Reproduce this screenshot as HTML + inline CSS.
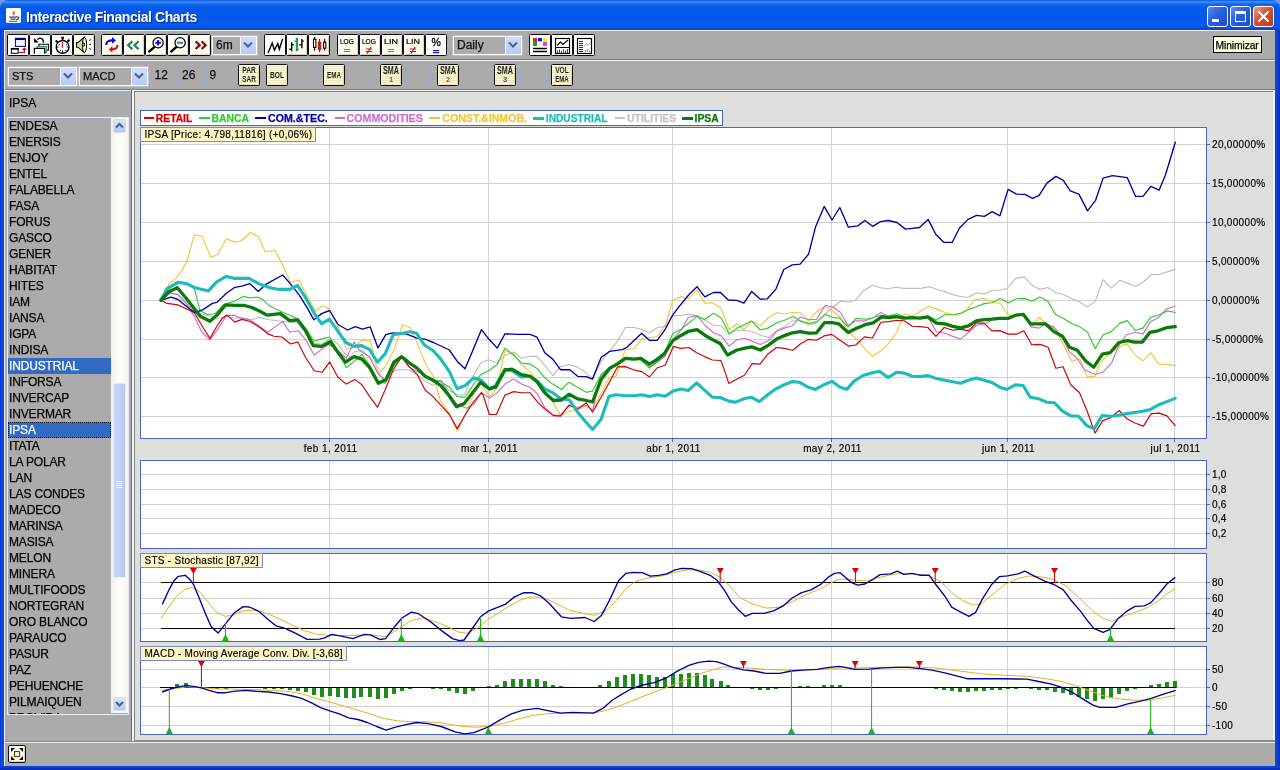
<!DOCTYPE html><html><head><meta charset="utf-8"><title>Interactive Financial Charts</title><style>
*{box-sizing:border-box}
html,body{margin:0;padding:0}
body{width:1280px;height:770px;position:relative;overflow:hidden;background:#7d97e6;
 font-family:"Liberation Sans",sans-serif;font-size:12px;color:#000;will-change:transform;-webkit-font-smoothing:antialiased}
.abs{position:absolute}
#title{left:0;top:0;width:1280px;height:30px;
 background:linear-gradient(to bottom,#0a55dc 0%,#3a90fa 6%,#1266ee 14%,#0459ea 28%,#0458ee 60%,#055af0 84%,#0550dc 94%,#0440b8 100%);
 border-radius:8px 8px 0 0}
#title .t{left:26px;top:9px;color:#fff;font-weight:bold;font-size:14px;letter-spacing:-0.43px;white-space:nowrap;
 text-shadow:1px 1px 1px #0a2a80}
#bl{left:0;top:30px;width:4px;height:740px;background:linear-gradient(to right,#0831d9,#0a4fe6 50%,#0843dc)}
#br{left:1275px;top:30px;width:5px;height:740px;background:linear-gradient(to right,#0a46dc,#0a3fd0 60%,#062da8)}
#bb{left:0;top:766px;width:1280px;height:4px;background:linear-gradient(to bottom,#0a46dc,#0836c8 60%,#062da8)}
.wb{top:6px;width:21px;height:21px;border:1px solid #fff;border-radius:3px;
 background:linear-gradient(135deg,#5b8bf0 0%,#2a5fe0 45%,#1a4bd0 100%)}
#wclose{background:linear-gradient(135deg,#f0a080 0%,#d8502a 45%,#c03a18 100%)}
#content{left:4px;top:30px;width:1271px;height:736px;background:#ababab}
.tb{left:4px;width:1271px;background:#ababab}
.btn{position:absolute;width:22px;height:22px;border:1px solid #101010;border-radius:1.5px;background:#fffdf2;
 box-shadow:inset 1px 1px 0 #fff, inset -1px -1px 0 #d8d4c0}
.btn svg{position:absolute;left:0;top:0}
.combo{position:absolute;height:19px;background:#ababab;border:1px solid #fbfcff;font-size:12px;line-height:17px;padding-left:3px;color:#111;
 box-shadow:0 0 0 0.5px rgba(255,255,255,0.5)}
.combo .ar{position:absolute;right:0;top:0;width:16px;height:17px;border-left:1px solid #f4f7ff;border-radius:0;
 background:linear-gradient(to bottom,#d0dcfc,#c2d2fa 60%,#b8caf6)}
.fld{position:absolute;height:21px;border:1px solid #9fabbf;font-size:12px;line-height:18px;padding-left:2.5px;color:#111;background:#ababab}
#left{left:4px;top:90px;width:127px;height:652px;background:#ababab;border-top:1px solid #f0f0f0}
#list{left:7px;top:117px;width:122px;height:598px;border:1px solid #e4ecf8;background:#ababab;overflow:hidden;
 box-shadow:inset 0 0 0 1px #a0acc0}
#list .it{position:absolute;left:0px;width:103px;height:16px;line-height:16px;font-size:12px;padding-left:1px;white-space:nowrap;letter-spacing:-0.15px}
#list .sel{background:#316ac5;color:#fff}
#sb{left:103px;top:0px;width:17px;height:595px;background:linear-gradient(to right,#f0f0ea,#fdfdfa 50%,#f4f4f0)}
.sbb{position:absolute;left:2px;width:13px;height:14px;border:1px solid #d4defa;border-radius:2px;
 background:linear-gradient(to bottom,#dce6fd,#c2d2f8 60%,#b4c6f4)}
#thumb{position:absolute;left:2px;top:265px;width:13px;height:195px;border:1px solid #e8eefc;border-radius:2px;
 background:linear-gradient(to right,#cad8fa,#c0d0f8 60%,#b4c6f2)}
#divider{left:131px;top:90px;width:4px;height:652px;background:linear-gradient(to right,#6e6e6e 0,#6e6e6e 1px,#f6f6f6 1px,#f6f6f6 3px,#808080 3px)}
#charts{left:135px;top:92px;width:1138px;height:648px;background:#dddfdc}
#status{left:4px;top:742px;width:1271px;height:24px;background:#ababab;border-top:1px solid #f0f0f0}
#tip{left:1213px;top:36px;width:49px;height:17px;background:#ffffe1;border:1px solid #000;font-size:10.3px;line-height:17px;text-align:left;padding-left:1.5px;letter-spacing:-0.1px}
svg text{font-family:"Liberation Sans",sans-serif}
#list .it,#tip,.combo,.fld,#left{-webkit-text-stroke:0.25px}
svg.ch text{stroke:#000;stroke-width:0.16px}
svg.ch text.lg{stroke-width:0.25px}
</style></head><body>
<div id="title" class="abs"><svg class="abs" style="left:6px;top:8px" width="15" height="15" viewBox="0 0 15 15"><rect x="0" y="0" width="15" height="15" rx="1.2" fill="#fbfbf9"/><path d="M9.4 1.6 C7.4 3.8 9.9 5.2 7.6 7.9 C7.2 6.2 5.6 5.6 6.7 3.9 C7.3 2.9 8.8 2.6 9.4 1.6z" fill="#ee8a1c"/><path d="M8.8 4 C8.2 5.2 8.9 5.8 8 7.2" stroke="#d85818" stroke-width="0.8" fill="none"/><path d="M3.3 9.1H10.4M4.5 11.1H9.6" stroke="#3c4458" stroke-width="1.1"/><path d="M10.4 8.6 C13.4 8.6 13.2 11.6 10 12" stroke="#3c4458" stroke-width="1.2" fill="none"/><path d="M2.8 13.3H11.2" stroke="#505868" stroke-width="1"/></svg><div class="t abs">Interactive Financial Charts</div>
<div class="wb abs" style="left:1207px"><svg width="19" height="19"><rect x="4" y="12" width="7" height="3" fill="#fff"/></svg></div>
<div class="wb abs" style="left:1230px"><svg width="19" height="19"><rect x="4.5" y="4.5" width="10" height="10" fill="none" stroke="#fff" stroke-width="1"/><rect x="4" y="4" width="11" height="3" fill="#fff"/></svg></div>
<div class="wb abs" id="wclose" style="left:1253px"><svg width="19" height="19"><path d="M5 5 L14 14 M14 5 L5 14" stroke="#fff" stroke-width="2.2" stroke-linecap="round"/></svg></div>
</div>
<div id="content" class="abs"></div>
<div id="bl" class="abs"></div><div id="br" class="abs"></div><div id="bb" class="abs"></div>
<div class="abs" style="left:4px;top:30px;width:1271px;height:1px;background:#f4f4f4"></div>
<div class="abs" style="left:4px;top:59px;width:1271px;height:1px;background:#7c7c7c"></div>
<div class="abs" style="left:4px;top:60px;width:1271px;height:1px;background:#f0f0f0"></div>
<div class="abs" style="left:4px;top:89px;width:1271px;height:1px;background:#7c7c7c"></div>
<div class="btn" style="left:7px;top:34px;background:#fff;box-shadow:none"><svg width="20" height="20" viewBox="0 0 20 20"><rect x="7.4" y="3.4" width="10" height="8" fill="#f2f4f0" stroke="#00008b"/><rect x="6.9" y="2.9" width="11" height="2.1" fill="#00008b"/><rect x="3.4" y="13.5" width="6.8" height="4.8" fill="#fff" stroke="#000"/><rect x="2.9" y="13" width="7.8" height="1.7" fill="#000"/><path d="M10.6 17.5H16.3V14" stroke="#c80028" stroke-width="1.2" fill="none"/><path d="M13.9 15 L16.3 12.3 L18.7 15z" fill="#c80028"/></svg></div>
<div class="btn" style="left:29px;top:34px;background:#fff;box-shadow:none"><svg width="20" height="20" viewBox="0 0 20 20"><path d="M9 11.3V9.3H18.4V15.3H16.5" fill="#fff" stroke="#000" stroke-width="1.1"/><path d="M7.2 13.4V11.5H16.5V17.4H14.7" fill="#d4f0e4" stroke="#3c8c74" stroke-width="1.1"/><path d="M4.4 18.8V13.4H14.7V18.8" fill="#fff" stroke="#000" stroke-width="1.2"/><path d="M7.4 4.6 C9 2.6 13.5 2.4 13.5 7.8" fill="none" stroke="#000" stroke-width="1.3"/><path d="M4.2 3.1 L8.7 7.6 L4.2 7.6z" fill="#000"/></svg></div>
<div class="btn" style="left:51px;top:34px;background:#fff;box-shadow:none"><svg width="20" height="20" viewBox="0 0 20 20"><circle cx="10.6" cy="11.9" r="6.4" fill="#fff" stroke="#000" stroke-width="1.4"/><path d="M10.6 5.5V2.8M9.2 2.6H12" stroke="#000" stroke-width="1.7"/><path d="M3.6 5.6L6 7.6M17.4 4.8L15.2 7" stroke="#000" stroke-width="2"/><path d="M4.9 12H6.5M14.7 12H16.3M10.6 15.5V17.6" stroke="#000" stroke-width="1.1"/><path d="M7 9.3h1v1h-1zM14.2 9.3h1v1h-1zM7.9 15h1v1h-1zM13.3 15h1v1h-1z" fill="#000"/><path d="M10.4 7V12.8" stroke="#d02828" stroke-width="1.4"/></svg></div>
<div class="btn" style="left:73px;top:34px"><svg width="20" height="20" viewBox="0 0 20 20"><path d="M2.5 7.6 L3.9 7.6 L10 2.4 L10 17.4 L3.9 12.2 L2.5 12.2z" fill="#dcdc84" stroke="#000" stroke-width="1.1"/><ellipse cx="10.5" cy="9.9" rx="2.1" ry="7.5" fill="#f6f6dc" stroke="#000" stroke-width="1"/><ellipse cx="9.8" cy="9.5" rx="0.8" ry="2" fill="none" stroke="#000" stroke-width="0.9"/><path d="M15.3 5.75L16.8 4.25M15.3 9.3H17M15.3 12.9L16.8 14.6" stroke="#000" stroke-width="1"/></svg></div>
<div class="btn" style="left:101px;top:34px"><svg width="20" height="20" viewBox="0 0 20 20"><path d="M4.3 10 C4.4 6 6.5 5.3 10.4 5.3" fill="none" stroke="#0808e0" stroke-width="2.2"/><path d="M10 2 L13.9 5.4 L10 8.7z" fill="#0808e0"/><path d="M10 14.3 C13.6 14.3 15.3 13.5 15.5 10" fill="none" stroke="#d01010" stroke-width="2.2"/><path d="M10.4 11.1 L6.9 14.4 L10.4 17.7z" fill="#d01010"/></svg></div>
<div class="btn" style="left:123px;top:34px"><svg width="20" height="20" viewBox="0 0 20 20"><path d="M8.3 6.2 L4.2 10.25 L8.3 14.3 M14.6 6.2 L10.5 10.25 L14.6 14.3" stroke="#1e8060" stroke-width="2.3" fill="none"/></svg></div>
<div class="btn" style="left:145px;top:34px"><svg width="20" height="20" viewBox="0 0 20 20"><circle cx="12.1" cy="7.75" r="5.1" fill="#fff" stroke="#000" stroke-width="1.25"/><path d="M8.3 12.2 L3.2 16.5" stroke="#000" stroke-width="2.4" stroke-linecap="round"/><path d="M9.4 7.75H14.9M12.1 5V10.5" stroke="#0808e0" stroke-width="1.9"/></svg></div>
<div class="btn" style="left:167px;top:34px"><svg width="20" height="20" viewBox="0 0 20 20"><circle cx="12.1" cy="7.75" r="5.1" fill="#fff" stroke="#000" stroke-width="1.25"/><path d="M8.3 12.2 L3.2 16.5" stroke="#000" stroke-width="2.4" stroke-linecap="round"/><path d="M9 7.75H15" stroke="#20a060" stroke-width="2.1"/></svg></div>
<div class="btn" style="left:189px;top:34px"><svg width="20" height="20" viewBox="0 0 20 20"><path d="M5.6 6.4 L9.7 10.2 L5.6 14 M11.6 6.4 L15.7 10.2 L11.6 14" stroke="#8b0a0a" stroke-width="2.3" fill="none"/></svg></div>
<div class="btn" style="left:264px;top:34px;background:#fff;box-shadow:none"><svg width="20" height="20" viewBox="0 0 20 20"><path d="M3.1 18.1 L7.2 8 L9.4 15.1 L12.7 8.6 L14.3 14.3 L17.6 3.9" fill="none" stroke="#000" stroke-width="1.4"/></svg></div>
<div class="btn" style="left:286px;top:34px"><svg width="20" height="20" viewBox="0 0 20 20"><path d="M4.7 7.2V16.2M2.3 14.3H4.7M4.7 9.7H6.7" stroke="#000" stroke-width="1.4" fill="none"/><path d="M9.9 2.8V16.2" stroke="#18a058" stroke-width="2.2"/><path d="M7.5 6.1H9.9M9.9 14.3H11.9" stroke="#18a058" stroke-width="1.3"/><path d="M14.9 3.9V13.2M12.1 9.9H14.9M14.9 6.1H16.8" stroke="#000" stroke-width="1.4" fill="none"/></svg></div>
<div class="btn" style="left:308px;top:34px"><svg width="20" height="20" viewBox="0 0 20 20"><path d="M5.6 2V15.7" stroke="#000" stroke-width="1.1"/><rect x="4.5" y="4.2" width="2.4" height="8.2" fill="#fff" stroke="#000" stroke-width="1.1"/><path d="M10.5 3.9V17.3" stroke="#d01010" stroke-width="1.2"/><rect x="9.4" y="7.2" width="2.4" height="7.4" fill="#d01010" stroke="#d01010"/><path d="M15.7 3.9V15.4" stroke="#000" stroke-width="1.1"/><rect x="14.6" y="7.2" width="2.2" height="6" fill="#fff" stroke="#000" stroke-width="1.1"/></svg></div>
<div class="btn" style="left:337px;top:34px"><svg width="20" height="20" viewBox="0 0 20 20"><text x="8.9" y="8.9" font-size="7.6" text-anchor="middle" textLength="14" lengthAdjust="spacingAndGlyphs" fill="#000" stroke="#000" stroke-width="0.2">LOG</text><path d="M5.8 14.5H12M5.8 16.5H12" stroke="#20a050" stroke-width="1.1"/></svg></div>
<div class="btn" style="left:359px;top:34px"><svg width="20" height="20" viewBox="0 0 20 20"><text x="8.9" y="8.9" font-size="7.6" text-anchor="middle" textLength="14" lengthAdjust="spacingAndGlyphs" fill="#000" stroke="#000" stroke-width="0.2">LOG</text><path d="M5.8 14H12M5.8 16.5H12M11.2 11.8L7 18.8" stroke="#c01818" stroke-width="1.1"/></svg></div>
<div class="btn" style="left:381px;top:34px"><svg width="20" height="20" viewBox="0 0 20 20"><text x="8.9" y="8.9" font-size="7.6" text-anchor="middle" textLength="14" lengthAdjust="spacingAndGlyphs" fill="#000" stroke="#000" stroke-width="0.2">LIN</text><path d="M5.8 14.5H12M5.8 16.5H12" stroke="#20a050" stroke-width="1.1"/></svg></div>
<div class="btn" style="left:403px;top:34px"><svg width="20" height="20" viewBox="0 0 20 20"><text x="8.9" y="8.9" font-size="7.6" text-anchor="middle" textLength="14" lengthAdjust="spacingAndGlyphs" fill="#000" stroke="#000" stroke-width="0.2">LIN</text><path d="M5.8 14H12M5.8 16.5H12M11.2 11.8L7 18.8" stroke="#c01818" stroke-width="1.1"/></svg></div>
<div class="btn" style="left:425px;top:34px;background:#fff;box-shadow:none"><svg width="20" height="20" viewBox="0 0 20 20"><text x="10.2" y="11" font-size="10.5" text-anchor="middle" stroke="#000" stroke-width="0.3">%</text><path d="M7 15.6H13.2M7 17.6H13.2" stroke="#2020c0" stroke-width="1.1"/></svg></div>
<div class="btn" style="left:529px;top:34px;background:#fff;box-shadow:none"><svg width="20" height="20" viewBox="0 0 20 20"><rect x="2" y="2" width="16" height="17" fill="#fff"/><rect x="3" y="3" width="4" height="4" fill="#e82020"/><rect x="3" y="7" width="4" height="4" fill="#20a020"/><rect x="8" y="3" width="4" height="3.5" fill="#1818e0"/><rect x="13" y="3" width="4" height="4" fill="#f0f020"/><rect x="13" y="7" width="4" height="4" fill="#e040e0"/><rect x="8" y="6.5" width="5" height="4.5" fill="#ffe8f0"/><path d="M3 13.5H17M3 16.5H17" stroke="#000" stroke-width="1.6"/></svg></div>
<div class="btn" style="left:551px;top:34px;background:#fff;box-shadow:none"><svg width="20" height="20" viewBox="0 0 20 20"><rect x="3.5" y="3.5" width="14" height="15" fill="#fff" stroke="#000" stroke-width="1.2"/><path d="M3.5 12.5H17.5" stroke="#000"/><path d="M5 10.5 L8.5 7 L11 9.5 L16 5" fill="none" stroke="#000" stroke-width="1.1"/><path d="M5.5 18V15.5M7.5 18V14.5M9.5 18V16M11.5 18V14.5M13.5 18V15.5M15.5 18V14" stroke="#c01818" stroke-width="1.1"/></svg></div>
<div class="btn" style="left:573px;top:34px;background:#fff;box-shadow:none"><svg width="20" height="20" viewBox="0 0 20 20"><rect x="3.5" y="3.5" width="14" height="15" fill="#fff" stroke="#000" stroke-width="1.2"/><path d="M5 6.5H9M5 8.5H9M5 10.5H9M5 12.5H9M5 14.5H9M5 16.5H9" stroke="#2020b0" stroke-width="1.1"/><path d="M10 11.5 L12.5 8.5 L14 10.5 L16.5 7.5" fill="none" stroke="#a0a0a0" stroke-width="1"/><path d="M11.5 17V15M13.5 17V14M15.5 17V15.5" stroke="#80a0a0" stroke-width="1.1"/></svg></div>
<div class="combo" style="left:212px;top:36px;width:45px">6m<div class="ar"><svg width="14" height="15"><path d="M3 5.5 L7 9.5 L11 5.5" stroke="#4d6185" stroke-width="2" fill="none"/></svg></div></div>
<div class="combo" style="left:453px;top:36px;width:69px">Daily<div class="ar"><svg width="14" height="15"><path d="M3 5.5 L7 9.5 L11 5.5" stroke="#4d6185" stroke-width="2" fill="none"/></svg></div></div>
<div class="combo" style="left:8px;top:67px;width:69px;height:19px;line-height:17px;font-size:11px;padding-left:3px">STS<div class="ar"><svg width="14" height="15"><path d="M3 5.5 L7 9.5 L11 5.5" stroke="#4d6185" stroke-width="2" fill="none"/></svg></div></div>
<div class="combo" style="left:79px;top:67px;width:69px;height:19px;line-height:17px;font-size:11px;padding-left:3px">MACD<div class="ar"><svg width="14" height="15"><path d="M3 5.5 L7 9.5 L11 5.5" stroke="#4d6185" stroke-width="2" fill="none"/></svg></div></div>
<div class="fld" style="left:151px;top:64.5px;width:26px">12</div>
<div class="fld" style="left:178.5px;top:64.5px;width:26px">26</div>
<div class="fld" style="left:206px;top:64.5px;width:26px">9</div>
<div class="btn" style="left:238px;top:64px"><svg width="20" height="20" viewBox="0 0 20 20"><path d="M0.5 1.5H19.5M0.5 3.5H19.5M0.5 5.5H19.5M0.5 7.5H19.5M0.5 9.5H19.5M0.5 11.5H19.5M0.5 13.5H19.5M0.5 15.5H19.5M0.5 17.5H19.5M0.5 19.5H19.5" stroke="#e9e5bc" stroke-width="1"/><text x="10" y="7.7" font-size="9.5" font-family="Liberation Mono,monospace" font-weight="bold" text-anchor="middle" textLength="13.6" lengthAdjust="spacingAndGlyphs" fill="#000" fill-opacity="0.88">PAR</text><text x="10" y="16.9" font-size="9.5" font-family="Liberation Mono,monospace" font-weight="bold" text-anchor="middle" textLength="13.6" lengthAdjust="spacingAndGlyphs" fill="#000" fill-opacity="0.88">SAR</text></svg></div>
<div class="btn" style="left:266px;top:64px"><svg width="20" height="20" viewBox="0 0 20 20"><path d="M0.5 1.5H19.5M0.5 3.5H19.5M0.5 5.5H19.5M0.5 7.5H19.5M0.5 9.5H19.5M0.5 11.5H19.5M0.5 13.5H19.5M0.5 15.5H19.5M0.5 17.5H19.5M0.5 19.5H19.5" stroke="#e9e5bc" stroke-width="1"/><text x="10" y="12.9" font-size="9.8" font-family="Liberation Mono,monospace" font-weight="bold" text-anchor="middle" textLength="14" lengthAdjust="spacingAndGlyphs" fill="#000" fill-opacity="0.88">BOL</text></svg></div>
<div class="btn" style="left:323px;top:64px"><svg width="20" height="20" viewBox="0 0 20 20"><path d="M0.5 1.5H19.5M0.5 3.5H19.5M0.5 5.5H19.5M0.5 7.5H19.5M0.5 9.5H19.5M0.5 11.5H19.5M0.5 13.5H19.5M0.5 15.5H19.5M0.5 17.5H19.5M0.5 19.5H19.5" stroke="#e9e5bc" stroke-width="1"/><text x="10" y="12.9" font-size="9.8" font-family="Liberation Mono,monospace" font-weight="bold" text-anchor="middle" textLength="14" lengthAdjust="spacingAndGlyphs" fill="#000" fill-opacity="0.88">EMA</text></svg></div>
<div class="btn" style="left:380px;top:64px"><svg width="20" height="20" viewBox="0 0 20 20"><path d="M0.5 1.5H19.5M0.5 3.5H19.5M0.5 5.5H19.5M0.5 7.5H19.5M0.5 9.5H19.5M0.5 11.5H19.5M0.5 13.5H19.5M0.5 15.5H19.5M0.5 17.5H19.5M0.5 19.5H19.5" stroke="#e9e5bc" stroke-width="1"/><text x="10" y="9.3" font-size="10.3" font-family="Liberation Mono,monospace" font-weight="bold" text-anchor="middle" textLength="16" lengthAdjust="spacingAndGlyphs" fill="#000" fill-opacity="0.88">SMA</text><text x="10" y="17.4" font-size="8" font-family="Liberation Mono,monospace" font-weight="bold" text-anchor="middle" textLength="4.2" lengthAdjust="spacingAndGlyphs" fill="#d02020" fill-opacity="0.88">1</text></svg></div>
<div class="btn" style="left:437px;top:64px"><svg width="20" height="20" viewBox="0 0 20 20"><path d="M0.5 1.5H19.5M0.5 3.5H19.5M0.5 5.5H19.5M0.5 7.5H19.5M0.5 9.5H19.5M0.5 11.5H19.5M0.5 13.5H19.5M0.5 15.5H19.5M0.5 17.5H19.5M0.5 19.5H19.5" stroke="#e9e5bc" stroke-width="1"/><text x="10" y="9.3" font-size="10.3" font-family="Liberation Mono,monospace" font-weight="bold" text-anchor="middle" textLength="16" lengthAdjust="spacingAndGlyphs" fill="#000" fill-opacity="0.88">SMA</text><text x="10" y="17.4" font-size="8" font-family="Liberation Mono,monospace" font-weight="bold" text-anchor="middle" textLength="4.2" lengthAdjust="spacingAndGlyphs" fill="#b02048" fill-opacity="0.88">2</text></svg></div>
<div class="btn" style="left:494px;top:64px"><svg width="20" height="20" viewBox="0 0 20 20"><path d="M0.5 1.5H19.5M0.5 3.5H19.5M0.5 5.5H19.5M0.5 7.5H19.5M0.5 9.5H19.5M0.5 11.5H19.5M0.5 13.5H19.5M0.5 15.5H19.5M0.5 17.5H19.5M0.5 19.5H19.5" stroke="#e9e5bc" stroke-width="1"/><text x="10" y="9.3" font-size="10.3" font-family="Liberation Mono,monospace" font-weight="bold" text-anchor="middle" textLength="16" lengthAdjust="spacingAndGlyphs" fill="#000" fill-opacity="0.88">SMA</text><text x="10" y="17.4" font-size="8" font-family="Liberation Mono,monospace" font-weight="bold" text-anchor="middle" textLength="4.2" lengthAdjust="spacingAndGlyphs" fill="#2020a0" fill-opacity="0.88">3</text></svg></div>
<div class="btn" style="left:551px;top:64px"><svg width="20" height="20" viewBox="0 0 20 20"><path d="M0.5 1.5H19.5M0.5 3.5H19.5M0.5 5.5H19.5M0.5 7.5H19.5M0.5 9.5H19.5M0.5 11.5H19.5M0.5 13.5H19.5M0.5 15.5H19.5M0.5 17.5H19.5M0.5 19.5H19.5" stroke="#e9e5bc" stroke-width="1"/><text x="10" y="7.7" font-size="9.5" font-family="Liberation Mono,monospace" font-weight="bold" text-anchor="middle" textLength="13.6" lengthAdjust="spacingAndGlyphs" fill="#000" fill-opacity="0.88">VOL</text><text x="10" y="16.9" font-size="9.5" font-family="Liberation Mono,monospace" font-weight="bold" text-anchor="middle" textLength="13.6" lengthAdjust="spacingAndGlyphs" fill="#000" fill-opacity="0.88">EMA</text></svg></div>
<div class="fld" style="left:290px;top:64.5px;width:27px"></div>
<div class="fld" style="left:347px;top:64.5px;width:27px"></div>
<div class="fld" style="left:404px;top:64.5px;width:27px"></div>
<div class="fld" style="left:461px;top:64.5px;width:27px"></div>
<div class="fld" style="left:518px;top:64.5px;width:27px"></div>
<div class="fld" style="left:575px;top:64.5px;width:27px"></div>
<div id="tip" class="abs">Minimizar</div>
<div class="abs" style="left:4px;top:741px;width:131px;height:1px;background:#858585;z-index:4"></div>
<div class="abs" style="left:4px;top:30px;width:1px;height:736px;background:#eef0f4;z-index:5"></div>
<div id="left" class="abs"><div class="abs" style="left:2px;top:1px;width:123px;height:24px;border:1px solid #a4adbc"></div><div class="abs" style="left:5px;top:5px;font-size:12px">IPSA</div></div>
<div id="list" class="abs">
<div class="it" style="top:0px">ENDESA</div>
<div class="it" style="top:16px">ENERSIS</div>
<div class="it" style="top:32px">ENJOY</div>
<div class="it" style="top:48px">ENTEL</div>
<div class="it" style="top:64px">FALABELLA</div>
<div class="it" style="top:80px">FASA</div>
<div class="it" style="top:96px">FORUS</div>
<div class="it" style="top:112px">GASCO</div>
<div class="it" style="top:128px">GENER</div>
<div class="it" style="top:144px">HABITAT</div>
<div class="it" style="top:160px">HITES</div>
<div class="it" style="top:176px">IAM</div>
<div class="it" style="top:192px">IANSA</div>
<div class="it" style="top:208px">IGPA</div>
<div class="it" style="top:224px">INDISA</div>
<div class="it sel" style="top:240px">INDUSTRIAL</div>
<div class="it" style="top:256px">INFORSA</div>
<div class="it" style="top:272px">INVERCAP</div>
<div class="it" style="top:288px">INVERMAR</div>
<div class="it sel" style="top:304px;outline:1px dotted #111;outline-offset:-1px">IPSA</div>
<div class="it" style="top:320px">ITATA</div>
<div class="it" style="top:336px">LA POLAR</div>
<div class="it" style="top:352px">LAN</div>
<div class="it" style="top:368px">LAS CONDES</div>
<div class="it" style="top:384px">MADECO</div>
<div class="it" style="top:400px">MARINSA</div>
<div class="it" style="top:416px">MASISA</div>
<div class="it" style="top:432px">MELON</div>
<div class="it" style="top:448px">MINERA</div>
<div class="it" style="top:464px">MULTIFOODS</div>
<div class="it" style="top:480px">NORTEGRAN</div>
<div class="it" style="top:496px">ORO BLANCO</div>
<div class="it" style="top:512px">PARAUCO</div>
<div class="it" style="top:528px">PASUR</div>
<div class="it" style="top:544px">PAZ</div>
<div class="it" style="top:560px">PEHUENCHE</div>
<div class="it" style="top:576px">PILMAIQUEN</div>
<div class="it" style="top:592px">PROVIDA</div>
<div id="sb" class="abs"><div class="sbb" style="top:1px"><svg width="11" height="12"><path d="M2 7.5 L5.5 4 L9 7.5" stroke="#4d6185" stroke-width="2" fill="none"/></svg></div><div id="thumb"><svg width="11" height="193" style="position:absolute;left:0;top:0"><path d="M2.5 97.5h6M2.5 99.5h6M2.5 101.5h6M2.5 103.5h6" stroke="#eef3fe" stroke-width="1"/></svg></div><div class="sbb" style="top:579px"><svg width="11" height="12"><path d="M2 4 L5.5 7.5 L9 4" stroke="#4d6185" stroke-width="2" fill="none"/></svg></div></div>
</div>
<div id="divider" class="abs"></div>
<div id="charts" class="abs"></div>
<div class="abs" style="left:133px;top:90px;width:1142px;height:1px;background:#f6f6f6"></div>
<div class="abs" style="left:134px;top:91px;width:1140px;height:1px;background:#808080"></div>
<div class="abs" style="left:1273px;top:91px;width:2px;height:651px;background:#f2f2f2"></div>
<div class="abs" style="left:134px;top:740px;width:1141px;height:2px;background:#8a8a8a"></div>
<div id="status" class="abs"><div class="btn" style="left:4px;top:2px;width:18px;height:18px;border-radius:2px"><svg width="16" height="16" viewBox="0 0 16 16"><path d="M2 2h4l-4 4zM14 2h-4l4 4zM2 14h4l-4 -4zM14 14h-4l4 -4z" fill="#000"/><rect x="5.5" y="5.5" width="5" height="5" fill="#fff4f0" stroke="#803000" stroke-width="1.1"/></svg></div></div>
<svg class="abs ch" style="left:0;top:0" width="1280" height="770" viewBox="0 0 1280 770"><rect x="140.5" y="110.5" width="582" height="15" fill="#fff" stroke="#4866c4" shape-rendering="crispEdges"/><path d="M143.5 118H154" stroke="#d40000" stroke-width="2" shape-rendering="crispEdges"/><text class="lg" x="155.8" y="122" font-size="11" font-weight="bold" fill="#d40000" style="stroke:#d40000" textLength="36.5" lengthAdjust="spacingAndGlyphs">RETAIL</text><path d="M199 118H209.5" stroke="#2ecc2e" stroke-width="2" shape-rendering="crispEdges"/><text class="lg" x="211.5" y="122" font-size="11" font-weight="bold" fill="#2ecc2e" style="stroke:#2ecc2e" textLength="37.6" lengthAdjust="spacingAndGlyphs">BANCA</text><path d="M255.2 118H265.7" stroke="#0000b0" stroke-width="2" shape-rendering="crispEdges"/><text class="lg" x="268" y="122" font-size="11" font-weight="bold" fill="#0000b0" style="stroke:#0000b0" textLength="59.8" lengthAdjust="spacingAndGlyphs">COM.&amp;TEC.</text><path d="M334.5 118H345" stroke="#cc6fcc" stroke-width="2" shape-rendering="crispEdges"/><text class="lg" x="346.6" y="122" font-size="11" font-weight="bold" fill="#cc6fcc" style="stroke:#cc6fcc" textLength="76.2" lengthAdjust="spacingAndGlyphs">COMMODITIES</text><path d="M429 118H439.5" stroke="#f2c63c" stroke-width="2" shape-rendering="crispEdges"/><text class="lg" x="442.3" y="122" font-size="11" font-weight="bold" fill="#f2c63c" style="stroke:#f2c63c" textLength="84.7" lengthAdjust="spacingAndGlyphs">CONST.&amp;INMOB.</text><path d="M533 118H543.5" stroke="#1cbcbc" stroke-width="3" shape-rendering="crispEdges"/><text class="lg" x="545.8" y="122" font-size="11" font-weight="bold" fill="#1cbcbc" style="stroke:#1cbcbc" textLength="61.7" lengthAdjust="spacingAndGlyphs">INDUSTRIAL</text><path d="M614.5 118H625" stroke="#c4c4c4" stroke-width="2" shape-rendering="crispEdges"/><text class="lg" x="627" y="122" font-size="11" font-weight="bold" fill="#c4c4c4" style="stroke:#c4c4c4" textLength="49.3" lengthAdjust="spacingAndGlyphs">UTILITIES</text><path d="M682 118H692.5" stroke="#0a7a0a" stroke-width="3" shape-rendering="crispEdges"/><text class="lg" x="694.5" y="122" font-size="11" font-weight="bold" fill="#0a7a0a" style="stroke:#0a7a0a" textLength="24.3" lengthAdjust="spacingAndGlyphs">IPSA</text><rect x="140.5" y="127.5" width="1066" height="311" fill="#fff" stroke="#4866c4" stroke-width="1" shape-rendering="crispEdges"/><path d="M141 144.5H1206M141 183.5H1206M141 222.5H1206M141 261.5H1206M141 300.5H1206M141 339.5H1206M141 377.5H1206M141 416.5H1206" stroke="#d2d2d6" stroke-width="1" fill="none" shape-rendering="crispEdges"/><path d="M329.5 128V438M488.5 128V438M672.5 128V438M831.5 128V438M1007.5 128V438M1174.5 128V438" stroke="#d2d2d6" stroke-width="1" fill="none" shape-rendering="crispEdges"/><polyline points="160.9,300.3 169.5,283.1 175.7,278.4 181.9,270.6 186.6,262.1 194.4,234.8 202.2,236.4 210.8,257.4 217.8,254.3 226.4,238.7 234.9,242.1 241.2,241.0 250.5,232.5 258.3,236.4 265.3,251.9 274.8,250.3 281.9,263.6 290.5,282.3 299.1,280.0 305.3,292.5 315.5,311.3 322.5,305.8 329.5,308.9 338.1,326.9 346.3,348.9 354.1,347.3 361.9,340.3 370.5,341.1 375.2,362.2 379.1,373.9 386.9,364.5 394.7,348.1 402.5,324.7 410.3,327.8 417.3,343.4 425.9,364.5 433.8,377.0 440.0,399.7 449.4,413.8 457.2,430.9 465.0,415.3 472.0,398.1 479.1,380.2 483.9,387.2 489.4,396.6 496.4,388.8 505.0,350.5 513.6,353.6 521.4,364.5 530.0,371.6 537.0,380.9 544.8,390.3 552.7,401.3 560.5,415.6 569.1,411.4 577.7,409.8 586.3,405.9 592.5,409.8 601.1,393.4 609.7,377.0 615.9,376.3 625.3,349.7 633.9,348.9 641.7,338.8 649.4,337.5 657.2,336.7 665.8,324.2 672.8,300.0 681.4,296.6 688.4,299.2 697.0,289.8 704.8,303.1 712.7,302.8 721.3,308.6 729.1,329.7 736.9,323.4 743.9,329.7 751.7,321.1 760.3,325.8 768.1,318.0 776.7,312.8 784.5,313.8 792.3,312.5 800.2,312.8 808.8,321.1 816.6,311.7 824.4,306.6 831.9,310.2 840.3,317.7 848.1,331.7 855.9,338.8 864.5,348.1 872.3,356.3 880.2,351.3 888.8,343.4 896.6,332.5 904.4,313.8 912.2,316.1 920.0,311.4 928.6,306.3 936.4,309.1 945.0,312.5 952.8,314.5 961.4,313.8 966.9,309.1 974.7,299.7 983.3,298.4 991.1,301.3 1000.5,303.6 1007.5,314.5 1015.6,316.0 1023.4,315.0 1031.3,326.9 1039.1,317.5 1046.9,323.8 1054.7,328.4 1062.5,342.5 1071.9,361.3 1079.7,358.9 1087.2,376.9 1095.0,376.1 1100.0,362.8 1110.0,353.0 1118.8,347.2 1126.6,343.3 1135.2,355.0 1143.0,360.9 1150.8,352.7 1158.6,364.1 1166.4,364.4 1175.3,365.6" fill="none" stroke="#f2c63c" stroke-width="1.15" stroke-linejoin="round" stroke-linecap="round"/><polyline points="160.9,300.3 170.3,292.9 178.0,294.0 186.6,302.6 194.4,311.9 202.0,314.0 210.0,316.0 217.0,319.0 226.4,316.3 234.9,318.2 243.5,317.9 251.3,319.7 259.1,317.4 269.4,319.8 280.0,321.0 289.7,322.0 297.5,323.0 305.3,333.0 314.2,343.4 322.0,344.2 329.8,338.8 337.7,343.4 343.9,352.8 350.0,357.0 354.1,352.0 361.9,350.0 369.7,358.0 377.5,372.0 385.3,381.5 393.9,370.8 399.4,369.7 408.8,369.7 417.3,374.7 425.9,381.7 433.0,385.6 440.8,380.2 448.6,390.3 457.2,395.0 464.2,395.0 472.8,376.3 481.4,362.2 488.6,359.8 497.2,363.0 505.0,355.2 513.6,352.0 521.4,358.3 530.0,356.3 537.0,356.3 544.8,365.3 552.7,375.5 560.5,366.6 569.1,364.5 576.9,366.9 585.5,372.3 592.5,379.1 601.1,361.4 609.7,351.3 617.5,341.1 625.3,327.5 633.9,327.5 641.7,329.4 649.4,332.8 658.0,327.3 665.0,326.6 672.8,315.6 681.4,315.3 689.2,314.1 697.0,315.9 704.8,320.0 712.7,325.0 721.3,325.8 729.1,334.4 736.9,330.0 743.9,330.5 751.7,331.3 760.3,335.2 768.9,337.5 776.7,330.5 784.5,326.6 792.3,321.1 800.2,320.3 808.8,325.0 816.6,322.7 824.4,314.8 832.2,307.8 840.6,301.3 848.4,302.2 855.5,300.2 863.3,290.8 872.7,285.3 880.5,287.7 888.3,288.8 896.1,287.2 903.9,288.4 912.5,288.4 921.1,288.4 928.9,286.6 936.7,289.2 944.5,291.6 952.3,294.4 959.4,296.3 968.0,297.5 976.6,292.8 984.4,293.9 992.2,290.5 1000.0,290.0 1007.0,288.6 1015.6,278.4 1024.2,276.9 1031.3,284.7 1039.8,289.4 1047.7,287.5 1055.5,292.5 1064.1,294.8 1071.9,298.8 1079.7,301.9 1087.5,306.9 1095.3,301.1 1103.1,279.7 1111.3,288.1 1119.5,280.3 1127.3,283.1 1135.6,286.3 1143.0,282.3 1151.6,274.5 1159.4,274.5 1167.2,271.9 1175.3,269.4" fill="none" stroke="#bdbdbd" stroke-width="1.15" stroke-linejoin="round" stroke-linecap="round"/><polyline points="160.9,300.3 170.3,293.2 178.0,294.8 186.6,304.1 194.4,316.6 201.4,331.4 210.0,340.0 217.8,329.1 226.4,315.8 234.2,315.1 241.9,318.5 249.7,319.7 257.5,324.7 265.3,330.6 267.8,332.3 282.7,321.4 289.7,332.3 298.3,330.8 305.6,339.5 314.2,355.2 322.0,348.9 329.0,344.2 337.7,350.5 346.3,358.3 354.1,341.9 359.5,350.5 369.7,356.7 377.5,373.1 385.3,381.0 393.5,366.0 401.7,357.5 408.8,366.9 417.3,371.6 425.9,376.3 433.0,380.2 440.8,380.9 448.6,393.4 457.2,404.4 466.6,408.3 473.6,404.4 481.4,392.7 489.4,398.1 497.2,392.7 505.0,384.1 513.6,379.1 521.4,384.1 530.0,387.2 537.0,393.4 544.8,407.5 553.4,415.3 560.5,415.3 569.1,405.2 577.7,407.5 586.3,405.2 592.5,410.6 601.1,374.7 609.7,366.9 617.5,363.8 625.3,358.3 633.9,359.1 640.9,358.3 649.5,366.9 657.3,362.2 665.0,356.3 672.8,339.8 681.4,329.7 688.4,317.2 697.0,315.6 704.8,325.0 713.4,332.8 721.3,335.9 729.1,346.1 736.9,339.8 744.7,338.3 752.5,341.4 760.3,344.5 768.9,340.6 776.7,331.3 784.5,328.1 792.3,325.8 800.2,317.2 808.8,319.5 816.6,319.5 825.2,305.5 833.0,307.0 840.3,312.2 848.1,325.5 855.9,320.8 865.3,320.8 873.1,317.7 880.9,312.5 887.2,316.1 896.6,316.6 904.4,318.1 912.2,317.7 920.0,318.1 927.8,316.9 936.4,331.7 945.0,333.3 952.8,336.4 960.6,339.1 968.4,332.5 976.3,325.5 984.1,323.9 991.9,320.0 999.7,318.4 1007.5,318.1 1015.6,315.2 1023.4,314.4 1031.3,326.9 1039.1,328.1 1045.3,323.8 1053.9,326.9 1061.7,336.3 1069.5,351.9 1076.6,357.8 1084.4,369.8 1095.3,374.5 1103.1,372.2 1111.7,362.8 1118.8,345.6 1126.6,334.7 1135.2,332.3 1143.0,333.9 1150.8,321.4 1158.6,317.5 1166.4,308.9 1175.3,306.3" fill="none" stroke="#cc6fcc" stroke-width="1.15" stroke-linejoin="round" stroke-linecap="round"/><polyline points="160.9,300.3 167.1,290.1 178.0,281.6 186.6,283.0 194.4,288.6 199.9,310.4 207.7,314.7 215.5,313.5 223.2,304.9 234.9,301.0 243.5,296.4 249.7,297.9 257.5,297.1 263.0,299.8 269.4,305.8 280.3,311.3 289.7,315.2 298.3,319.1 306.9,330.0 313.9,341.3 322.5,338.6 329.5,337.0 337.7,350.5 346.3,367.7 354.1,361.4 361.9,354.4 369.7,365.3 378.3,381.7 385.3,383.3 393.9,364.5 401.7,357.5 409.5,363.5 417.3,368.8 425.2,376.0 433.0,379.5 440.8,381.7 449.4,387.2 457.2,396.6 465.0,397.3 472.8,385.6 480.6,374.7 488.6,370.8 497.2,364.5 505.0,348.1 513.6,355.2 521.4,363.0 530.0,364.1 537.0,368.4 544.8,377.8 552.7,384.1 561.3,389.5 569.1,382.2 577.7,387.5 586.3,392.2 592.5,391.1 601.1,374.7 609.7,367.7 617.5,363.0 625.3,358.3 633.9,359.1 640.0,359.4 649.4,368.0 657.2,361.7 665.0,351.6 672.8,333.6 681.4,328.9 689.2,322.7 697.0,316.4 704.8,319.5 713.4,313.3 721.3,318.0 729.1,333.6 736.9,328.1 743.9,325.0 751.7,321.1 760.3,330.0 768.1,328.1 776.7,322.7 784.5,320.3 793.1,316.4 800.2,321.1 808.8,323.4 816.6,321.9 825.2,314.4 832.2,317.2 840.3,318.4 848.1,327.0 855.9,318.4 865.3,319.2 873.1,317.7 880.9,315.3 888.8,316.1 896.6,313.8 904.4,317.0 912.2,317.5 920.0,317.7 927.8,316.1 936.4,320.0 945.0,314.5 952.8,315.0 961.4,313.0 970.0,309.1 976.3,306.7 984.1,303.6 991.9,302.8 1000.5,298.4 1008.6,303.1 1016.4,298.8 1024.2,298.4 1032.0,301.1 1039.8,296.9 1047.7,301.1 1055.5,314.4 1064.1,318.8 1071.9,323.8 1079.7,326.6 1087.5,332.3 1095.3,348.8 1103.1,334.7 1110.9,331.9 1119.5,323.4 1127.3,320.6 1135.2,330.3 1143.0,328.1 1150.8,317.2 1159.4,314.7 1167.2,310.9 1175.3,312.5" fill="none" stroke="#2ecc2e" stroke-width="1.15" stroke-linejoin="round" stroke-linecap="round"/><polyline points="160.9,300.3 167.1,303.4 178.0,304.9 186.6,309.1 194.4,312.7 203.0,327.5 210.0,338.4 217.0,326.0 222.5,318.2 227.1,315.1 234.9,322.1 241.9,319.4 249.7,321.3 257.5,326.0 262.0,329.0 267.8,333.9 274.0,336.3 281.9,337.0 290.5,344.0 297.8,341.9 305.6,357.5 314.2,370.8 322.0,372.3 329.8,361.9 337.7,377.0 346.3,384.1 354.8,379.4 361.9,384.8 369.7,396.6 377.5,407.2 385.3,389.5 393.1,370.0 401.7,356.7 408.8,366.1 417.3,374.7 425.2,390.3 433.0,396.6 440.8,405.2 449.4,414.5 457.2,428.6 465.0,415.3 472.8,402.8 481.4,392.7 483.0,395.0 489.4,414.5 496.4,414.5 505.0,395.0 513.6,391.6 521.4,392.7 530.0,392.7 537.0,401.3 544.8,409.1 553.4,415.6 560.5,416.1 569.1,405.2 577.7,409.1 586.3,402.8 592.5,412.2 601.1,397.3 609.7,381.7 617.5,366.9 625.3,366.6 633.9,370.0 641.7,371.6 649.5,377.0 657.3,367.7 665.2,365.3 673.3,346.4 680.3,348.4 688.9,347.5 696.7,352.7 704.5,356.6 712.3,360.0 720.9,360.5 724.1,369.1 728.8,383.4 736.6,379.2 744.4,375.3 752.2,363.6 760.0,364.1 767.8,354.2 776.4,347.5 784.2,348.4 792.8,350.3 800.6,343.8 808.4,339.4 816.3,340.2 824.1,335.9 831.9,334.4 840.0,340.3 848.6,346.1 855.7,345.0 864.5,336.9 872.3,338.0 880.9,322.3 888.8,321.6 896.6,320.3 904.4,320.8 912.2,326.3 920.0,326.6 927.8,327.5 935.9,336.4 944.2,327.5 952.8,330.2 960.6,329.1 968.4,330.9 976.3,323.1 984.1,323.1 991.9,330.9 999.7,330.6 1008.3,334.1 1016.9,334.1 1023.9,330.8 1031.7,344.8 1040.3,344.4 1048.1,347.2 1055.9,368.3 1063.0,366.7 1070.8,384.7 1079.4,392.5 1087.2,411.3 1095.0,433.1 1102.8,420.6 1110.6,417.8 1119.2,410.5 1127.0,418.8 1134.8,423.0 1143.4,426.1 1151.3,413.6 1159.1,413.1 1166.9,415.9 1175.2,425.6" fill="none" stroke="#d00000" stroke-width="1.15" stroke-linejoin="round" stroke-linecap="round"/><polyline points="160.9,300.3 171.0,297.1 178.0,299.5 186.6,306.5 195.2,312.7 203.0,309.6 212.3,303.4 217.0,302.3 226.4,293.2 234.9,287.3 241.9,286.2 249.7,283.6 258.3,291.4 265.3,284.7 269.4,282.3 282.7,275.0 290.5,283.9 299.1,294.8 306.9,307.3 313.9,319.8 321.7,313.6 329.5,310.5 338.1,324.5 347.5,330.0 355.3,326.6 362.3,329.2 370.2,326.9 378.0,348.0 385.8,334.7 392.8,332.8 406.1,333.9 416.3,337.8 425.6,339.4 433.4,342.5 449.4,350.0 457.2,361.4 465.0,368.8 472.8,350.5 481.4,329.7 488.6,338.8 497.2,348.1 505.0,333.8 517.5,334.4 530.0,334.4 537.0,337.2 544.8,352.8 552.7,359.1 560.5,369.7 569.8,369.7 577.7,376.3 586.3,376.6 592.5,379.1 601.1,357.5 609.7,351.3 622.2,349.7 626.9,347.3 641.7,333.3 643.0,334.4 649.4,340.3 657.2,340.3 665.0,329.7 672.8,314.8 680.6,304.7 688.4,295.3 697.0,286.7 704.8,296.9 713.4,292.5 720.5,292.5 728.3,300.0 736.9,300.3 743.9,303.1 751.7,291.4 760.3,299.2 767.3,298.8 775.9,289.1 783.8,269.5 792.3,264.8 800.2,264.1 808.6,254.1 815.6,226.7 824.2,206.4 832.0,220.0 839.8,207.5 848.4,227.2 857.8,225.9 864.8,220.5 872.7,226.3 880.5,221.6 888.3,220.5 896.9,222.5 905.5,229.1 912.5,228.3 919.5,227.5 928.1,219.4 935.9,234.5 943.8,242.3 952.3,242.3 959.4,228.3 968.0,219.4 976.6,215.3 984.4,216.3 992.2,211.6 1000.0,215.8 1008.1,189.4 1016.4,194.1 1025.0,194.4 1032.5,198.3 1039.1,195.3 1046.9,183.1 1055.9,176.4 1063.3,180.3 1070.3,190.9 1078.9,194.1 1087.5,210.9 1095.6,200.3 1103.1,178.1 1112.5,175.6 1127.3,177.7 1135.6,196.4 1143.0,196.4 1150.8,186.3 1159.1,190.2 1165.6,174.5 1175.3,142.2" fill="none" stroke="#00009c" stroke-width="1.35" stroke-linejoin="round" stroke-linecap="round"/><polyline points="160.9,300.3 167.1,288.6 178.0,282.3 186.6,283.6 195.2,287.8 208.4,290.9 217.0,281.6 226.4,276.4 234.9,278.4 249.0,278.4 259.1,283.9 269.4,287.5 278.8,289.4 289.7,289.4 297.5,285.5 305.3,297.2 313.9,312.8 321.7,323.8 329.5,319.1 338.1,331.6 345.9,342.5 353.8,346.4 361.6,345.6 369.7,349.7 377.5,362.2 385.3,353.6 393.1,334.8 402.5,333.3 410.3,331.7 416.6,333.3 424.4,345.0 433.0,350.5 440.8,359.1 449.4,371.6 457.2,388.8 465.0,385.6 473.6,377.8 481.4,380.2 489.4,388.8 495.6,385.6 505.0,369.2 512.0,370.8 521.4,377.0 530.0,376.3 537.0,380.9 544.8,388.8 552.7,392.7 561.3,398.9 569.1,399.7 577.7,412.2 584.7,420.8 592.5,429.4 601.1,419.2 608.9,396.6 615.9,394.7 625.3,395.8 633.9,395.8 641.7,394.7 649.5,396.6 657.3,394.7 665.2,396.3 673.3,390.9 681.1,389.1 688.1,390.6 696.7,382.8 704.5,390.2 712.3,397.2 720.2,397.5 728.8,401.1 735.8,402.2 743.6,398.8 751.4,397.2 759.2,401.6 767.8,394.8 775.6,389.1 784.2,384.7 792.0,381.6 799.8,382.3 807.7,387.0 815.5,389.4 823.3,385.0 831.9,381.3 839.7,387.0 846.7,389.4 854.4,380.9 863.0,375.5 871.6,373.1 879.4,371.3 888.0,377.5 896.6,372.3 904.4,373.1 912.2,376.3 920.0,376.6 927.8,375.5 936.4,378.6 945.0,380.2 952.8,381.7 960.6,383.3 968.4,380.2 976.3,378.1 984.1,380.2 991.9,382.5 999.7,387.2 1006.7,389.5 1015.3,384.8 1023.1,385.5 1030.2,397.2 1038.8,398.8 1046.6,402.2 1054.4,402.7 1062.2,410.9 1070.8,415.9 1078.6,416.3 1086.4,425.3 1094.2,428.8 1102.0,415.6 1110.6,416.3 1119.2,415.2 1127.0,413.6 1134.8,412.5 1142.7,411.3 1150.5,409.4 1158.3,405.0 1166.9,401.6 1175.2,398.4" fill="none" stroke="#1cbcbc" stroke-width="3.1" stroke-linejoin="round" stroke-linecap="round"/><polyline points="160.9,300.3 168.7,291.7 177.3,287.8 186.6,298.7 194.4,308.8 200.6,316.6 210.0,321.3 217.0,315.1 225.6,304.9 234.9,305.4 243.5,305.4 250.5,307.0 258.3,310.4 265.3,314.3 267.8,315.2 280.3,313.6 289.7,320.6 297.5,319.8 305.3,330.0 313.1,345.6 321.7,346.4 330.3,341.7 337.7,352.0 345.5,362.2 354.1,356.7 361.9,359.1 369.7,367.7 378.3,383.3 386.1,379.4 393.9,362.2 401.7,356.7 409.5,363.0 417.3,368.4 425.2,376.3 433.0,380.2 440.8,385.6 448.6,395.0 456.4,406.7 464.2,403.6 472.0,393.4 480.6,382.5 489.4,388.8 495.6,387.2 505.0,370.0 512.0,369.2 521.4,374.7 530.0,376.3 537.0,381.7 544.8,392.7 553.4,400.5 561.3,400.0 569.1,394.2 577.7,398.9 586.3,400.5 592.5,402.0 601.1,379.4 609.7,368.4 617.5,363.8 625.3,358.3 633.9,359.1 640.9,358.3 649.4,364.1 657.2,359.4 664.2,353.9 672.8,340.6 681.4,335.2 688.4,331.3 697.0,329.7 704.8,335.2 712.7,339.8 720.5,343.8 727.5,355.0 736.9,350.0 743.9,348.4 751.7,346.9 760.3,350.0 768.1,345.3 776.7,339.1 784.5,335.6 792.3,332.8 800.2,331.6 808.8,333.1 816.6,332.8 824.4,322.7 832.2,322.7 838.8,323.9 848.1,332.5 855.9,328.6 865.3,324.7 873.1,322.8 881.7,316.9 888.8,317.7 896.6,316.6 904.4,318.1 912.2,317.7 920.0,318.1 927.8,316.9 936.4,323.1 945.0,323.9 952.8,326.3 960.6,327.8 968.4,325.9 976.3,320.8 984.1,319.7 991.9,319.2 999.7,318.4 1008.6,318.3 1015.6,315.2 1023.4,314.4 1030.5,323.8 1045.3,323.8 1053.9,331.6 1062.5,336.3 1069.5,347.2 1077.3,350.3 1085.9,361.3 1093.8,367.2 1102.3,354.2 1110.2,352.7 1118.8,342.5 1127.3,340.6 1134.4,342.2 1142.2,342.2 1150.0,332.3 1157.8,330.8 1166.4,327.7 1175.3,326.6" fill="none" stroke="#0a7a0a" stroke-width="3.3" stroke-linejoin="round" stroke-linecap="round"/><rect x="140.5" y="127.5" width="175" height="14" fill="#fff4c4" stroke="#7a8cc0" shape-rendering="crispEdges"/><text x="144.5" y="138" font-size="10" textLength="167.5" lengthAdjust="spacing">IPSA [Price: 4.798,11816] (+0,06%)</text><path d="M1206 144.5H1210M1206 183.5H1210M1206 222.5H1210M1206 261.5H1210M1206 300.5H1210M1206 339.5H1210M1206 377.5H1210M1206 416.5H1210" stroke="#4866c4" shape-rendering="crispEdges"/><text x="1212" y="148" font-size="10" letter-spacing="0.32">20,00000%</text><text x="1212" y="187" font-size="10" letter-spacing="0.32">15,00000%</text><text x="1212" y="226" font-size="10" letter-spacing="0.32">10,00000%</text><text x="1212" y="265" font-size="10" letter-spacing="0.32">5,00000%</text><text x="1212" y="304" font-size="10" letter-spacing="0.32">0,00000%</text><text x="1212" y="343" font-size="10" letter-spacing="0.32">-5,00000%</text><text x="1212" y="381" font-size="10" letter-spacing="0.32">-10,00000%</text><text x="1212" y="420" font-size="10" letter-spacing="0.32">-15,00000%</text><path d="M329.5 438V442M488.5 438V442M672.5 438V442M831.5 438V442M1007.5 438V442M1174.5 438V442" stroke="#4866c4" shape-rendering="crispEdges"/><text x="330.5" y="452" font-size="10" text-anchor="middle" letter-spacing="0.4">feb 1, 2011</text><text x="489.5" y="452" font-size="10" text-anchor="middle" letter-spacing="0.4">mar 1, 2011</text><text x="673.5" y="452" font-size="10" text-anchor="middle" letter-spacing="0.4">abr 1, 2011</text><text x="832.5" y="452" font-size="10" text-anchor="middle" letter-spacing="0.4">may 2, 2011</text><text x="1008.5" y="452" font-size="10" text-anchor="middle" letter-spacing="0.4">jun 1, 2011</text><text x="1175.5" y="452" font-size="10" text-anchor="middle" letter-spacing="0.4">jul 1, 2011</text><rect x="140.5" y="460.5" width="1066" height="88" fill="#fff" stroke="#4866c4" stroke-width="1" shape-rendering="crispEdges"/><path d="M141 474.5H1206M141 489.5H1206M141 504.5H1206M141 518.5H1206M141 533.5H1206" stroke="#d2d2d6" stroke-width="1" fill="none" shape-rendering="crispEdges"/><path d="M329.5 461V548M488.5 461V548M672.5 461V548M831.5 461V548M1007.5 461V548M1174.5 461V548" stroke="#d2d2d6" stroke-width="1" fill="none" shape-rendering="crispEdges"/><path d="M1206 474.5H1210M1206 489.5H1210M1206 504.5H1210M1206 518.5H1210M1206 533.5H1210" stroke="#4866c4" shape-rendering="crispEdges"/><text x="1212" y="478" font-size="10" letter-spacing="0.25">1,0</text><text x="1212" y="493" font-size="10" letter-spacing="0.25">0,8</text><text x="1212" y="508" font-size="10" letter-spacing="0.25">0,6</text><text x="1212" y="522" font-size="10" letter-spacing="0.25">0,4</text><text x="1212" y="537" font-size="10" letter-spacing="0.25">0,2</text><rect x="140" y="549" width="1067" height="4" fill="#d4dcec"/><rect x="140.5" y="553.5" width="1066" height="88" fill="#fff" stroke="#4866c4" stroke-width="1" shape-rendering="crispEdges"/><path d="M141 582.5H1206M141 598.5H1206M141 613.5H1206M141 628.5H1206" stroke="#d2d2d6" stroke-width="1" fill="none" shape-rendering="crispEdges"/><path d="M329.5 554V641M488.5 554V641M672.5 554V641M831.5 554V641M1007.5 554V641M1174.5 554V641" stroke="#d2d2d6" stroke-width="1" fill="none" shape-rendering="crispEdges"/><path d="M161 582.5H1175M161 628.5H1175" stroke="#000" stroke-width="1.3" shape-rendering="crispEdges"/><polyline points="161.1,618.8 168.1,607.8 176.7,596.1 185.3,589.1 191.6,587.5 199.4,591.4 208.8,603.1 216.6,612.2 225.2,616.4 233.8,614.8 243.1,610.9 252.5,610.2 261.9,611.7 275.9,617.2 288.4,623.4 304.1,630.5 316.6,634.4 327.5,635.2 340.0,635.6 352.8,635.5 370.4,634.8 385.6,636.7 397.3,629.7 411.4,620.3 423.1,618.0 434.8,621.5 446.6,626.2 458.3,632.0 466.5,633.2 477.0,628.5 488.7,619.1 505.2,608.6 519.2,600.4 530.9,596.9 542.6,597.3 554.4,602.7 568.4,609.8 582.5,613.3 594.2,615.2 603.6,612.1 610.0,607.0 616.4,600.4 625.8,588.7 635.2,581.6 646.9,578.1 660.9,576.2 675.0,572.3 686.7,569.9 698.4,569.9 710.2,572.3 719.5,577.0 728.9,585.2 740.6,598.0 752.3,603.9 766.4,608.1 778.1,607.4 792.2,601.6 806.3,594.5 820.3,588.7 832.0,582.3 839.1,579.3 848.4,579.3 857.8,580.5 867.2,580.9 876.6,578.1 888.3,575.3 900.0,573.6 911.9,573.9 929.1,575.8 941.1,581.9 951.7,592.5 962.3,600.5 973.0,605.0 980.9,604.4 991.6,595.2 1004.8,584.5 1018.1,578.4 1028.7,576.0 1039.4,576.6 1052.6,579.2 1065.9,585.9 1079.2,597.8 1092.5,611.1 1103.1,618.5 1112.4,621.7 1121.7,616.9 1135.0,612.4 1148.3,607.1 1158.9,600.5 1166.9,593.8 1175.3,588.5" fill="none" stroke="#e8b020" stroke-width="1"/><polyline points="162.3,604.4 169.7,588.3 173.6,581.3 178.3,576.3 185.3,575.3 190.0,579.7 193.9,585.2 199.4,598.4 205.6,614.1 211.1,626.6 218.1,633.1 225.2,624.2 233.8,613.3 243.1,606.6 249.4,607.0 258.8,611.3 268.1,619.5 275.9,625.8 283.8,627.8 296.3,633.6 307.2,639.4 319.7,639.1 324.7,637.9 331.7,634.4 341.1,636.2 352.8,638.6 364.5,634.4 370.4,634.8 379.8,639.5 385.6,638.6 395.0,626.2 402.0,618.0 411.4,612.1 418.4,613.7 430.2,621.5 441.9,630.9 452.4,638.6 459.4,640.6 464.1,640.0 472.3,628.5 480.5,616.8 488.7,610.9 505.2,604.4 514.5,596.9 523.9,592.7 532.1,592.7 540.3,595.7 548.5,602.7 561.4,616.8 570.8,618.4 584.8,617.5 594.2,621.5 601.3,615.6 609.4,600.4 618.7,580.5 625.8,573.4 632.8,572.3 642.2,572.7 650.4,576.2 658.6,575.3 666.8,573.9 675.0,569.9 682.0,568.3 691.4,568.7 700.8,571.6 710.2,575.3 717.2,580.5 724.2,589.8 731.2,601.6 738.3,609.8 745.3,616.3 752.3,613.3 764.0,613.3 773.4,610.9 782.8,606.2 792.2,598.0 801.6,592.7 810.9,589.8 820.3,584.7 828.5,577.0 834.4,573.4 840.2,572.7 846.1,578.1 852.0,582.8 857.8,585.2 864.8,584.0 873.0,579.3 880.1,574.6 890.6,573.9 897.3,571.2 903.9,574.4 911.9,573.4 919.8,575.2 929.1,575.2 935.8,584.5 945.1,596.5 951.7,607.1 959.7,611.6 969.0,616.4 975.6,612.4 982.3,599.1 991.6,584.5 999.5,576.6 1007.5,575.8 1018.1,573.9 1024.8,571.2 1034.0,575.8 1044.7,581.1 1054.0,584.5 1063.3,589.8 1071.2,600.5 1080.5,611.1 1087.2,620.4 1093.8,628.4 1103.1,632.3 1109.7,629.7 1117.7,619.1 1127.0,611.1 1135.0,606.3 1144.3,605.8 1150.9,602.6 1158.9,593.8 1166.9,584.0 1175.3,577.4" fill="none" stroke="#00009c" stroke-width="1.35" stroke-linejoin="round"/><path d="M189.9 568h7l-3.5 6z" fill="#e00000"/><path d="M193.4 573V583" stroke="#c00000" stroke-width="1"/><path d="M716.7 568h7l-3.5 6z" fill="#e00000"/><path d="M720.2 573V583" stroke="#c00000" stroke-width="1"/><path d="M851.9 568h7l-3.5 6z" fill="#e00000"/><path d="M855.4 573V583" stroke="#c00000" stroke-width="1"/><path d="M931.7 568h7l-3.5 6z" fill="#e00000"/><path d="M935.2 573V583" stroke="#c00000" stroke-width="1"/><path d="M1051 568h7l-3.5 6z" fill="#e00000"/><path d="M1054.5 573V583" stroke="#c00000" stroke-width="1"/><path d="M222 641h7l-3.5 -7z" fill="#18b818"/><path d="M225.5 623.4V640" stroke="#18b818" stroke-width="1"/><path d="M397.8 641h7l-3.5 -7z" fill="#18b818"/><path d="M401.3 618V640" stroke="#18b818" stroke-width="1"/><path d="M477 641h7l-3.5 -7z" fill="#18b818"/><path d="M480.5 616.8V640" stroke="#18b818" stroke-width="1"/><path d="M1107 641h7l-3.5 -7z" fill="#18b818"/><path d="M1110.5 627V640" stroke="#18b818" stroke-width="1"/><rect x="140.5" y="553.5" width="122" height="14" fill="#fff4c4" stroke="#7a8cc0" shape-rendering="crispEdges"/><text x="144.5" y="564" font-size="10" textLength="114" lengthAdjust="spacing">STS - Stochastic [87,92]</text><path d="M1206 582.5H1210M1206 598.5H1210M1206 613.5H1210M1206 628.5H1210" stroke="#4866c4" shape-rendering="crispEdges"/><text x="1212" y="586" font-size="10" letter-spacing="0.25">80</text><text x="1212" y="602" font-size="10" letter-spacing="0.25">60</text><text x="1212" y="617" font-size="10" letter-spacing="0.25">40</text><text x="1212" y="632" font-size="10" letter-spacing="0.25">20</text><rect x="140.5" y="646.5" width="1066" height="88" fill="#fff" stroke="#4866c4" stroke-width="1" shape-rendering="crispEdges"/><path d="M141 669.5H1206M141 687.5H1206M141 706.5H1206M141 725.5H1206" stroke="#d2d2d6" stroke-width="1" fill="none" shape-rendering="crispEdges"/><path d="M329.5 647V734M488.5 647V734M672.5 647V734M831.5 647V734M1007.5 647V734M1174.5 647V734" stroke="#d2d2d6" stroke-width="1" fill="none" shape-rendering="crispEdges"/><rect x="167" y="686.8" width="4" height="0.8" fill="#1e8c1e" shape-rendering="crispEdges"/><rect x="175" y="684.0" width="4" height="3.5" fill="#1e8c1e" shape-rendering="crispEdges"/><rect x="184" y="683.3" width="4" height="4.2" fill="#1e8c1e" shape-rendering="crispEdges"/><rect x="192" y="685.6" width="4" height="1.9" fill="#1e8c1e" shape-rendering="crispEdges"/><rect x="215" y="687.5" width="4" height="1.9" fill="#1e8c1e" shape-rendering="crispEdges"/><rect x="224" y="687.5" width="4" height="1.2" fill="#1e8c1e" shape-rendering="crispEdges"/><rect x="263" y="687.5" width="4" height="1.2" fill="#1e8c1e" shape-rendering="crispEdges"/><rect x="272" y="687.5" width="4" height="1.2" fill="#1e8c1e" shape-rendering="crispEdges"/><rect x="280" y="687.5" width="4" height="1.6" fill="#1e8c1e" shape-rendering="crispEdges"/><rect x="288" y="687.5" width="4" height="2.3" fill="#1e8c1e" shape-rendering="crispEdges"/><rect x="296" y="687.5" width="4" height="3.0" fill="#1e8c1e" shape-rendering="crispEdges"/><rect x="304" y="687.5" width="4" height="4.7" fill="#1e8c1e" shape-rendering="crispEdges"/><rect x="312" y="687.5" width="4" height="7.7" fill="#1e8c1e" shape-rendering="crispEdges"/><rect x="320" y="687.5" width="4" height="9.4" fill="#1e8c1e" shape-rendering="crispEdges"/><rect x="328" y="687.5" width="4" height="8.7" fill="#1e8c1e" shape-rendering="crispEdges"/><rect x="336" y="687.5" width="4" height="9.4" fill="#1e8c1e" shape-rendering="crispEdges"/><rect x="344" y="687.5" width="4" height="10.5" fill="#1e8c1e" shape-rendering="crispEdges"/><rect x="352" y="687.5" width="4" height="10.1" fill="#1e8c1e" shape-rendering="crispEdges"/><rect x="359" y="687.5" width="4" height="9.4" fill="#1e8c1e" shape-rendering="crispEdges"/><rect x="368" y="687.5" width="4" height="9.4" fill="#1e8c1e" shape-rendering="crispEdges"/><rect x="376" y="687.5" width="4" height="11.7" fill="#1e8c1e" shape-rendering="crispEdges"/><rect x="384" y="687.5" width="4" height="10.5" fill="#1e8c1e" shape-rendering="crispEdges"/><rect x="392" y="687.5" width="4" height="6.3" fill="#1e8c1e" shape-rendering="crispEdges"/><rect x="400" y="687.5" width="4" height="3.5" fill="#1e8c1e" shape-rendering="crispEdges"/><rect x="408" y="687.5" width="4" height="1.2" fill="#1e8c1e" shape-rendering="crispEdges"/><rect x="431" y="687.5" width="4" height="1.2" fill="#1e8c1e" shape-rendering="crispEdges"/><rect x="439" y="687.5" width="4" height="1.9" fill="#1e8c1e" shape-rendering="crispEdges"/><rect x="447" y="687.5" width="4" height="3.0" fill="#1e8c1e" shape-rendering="crispEdges"/><rect x="455" y="687.5" width="4" height="5.2" fill="#1e8c1e" shape-rendering="crispEdges"/><rect x="463" y="687.5" width="4" height="6.3" fill="#1e8c1e" shape-rendering="crispEdges"/><rect x="471" y="687.5" width="4" height="3.0" fill="#1e8c1e" shape-rendering="crispEdges"/><rect x="487" y="686.3" width="4" height="1.2" fill="#1e8c1e" shape-rendering="crispEdges"/><rect x="495" y="684.5" width="4" height="3.0" fill="#1e8c1e" shape-rendering="crispEdges"/><rect x="503" y="681.2" width="4" height="6.3" fill="#1e8c1e" shape-rendering="crispEdges"/><rect x="511" y="678.6" width="4" height="8.9" fill="#1e8c1e" shape-rendering="crispEdges"/><rect x="519" y="678.6" width="4" height="8.9" fill="#1e8c1e" shape-rendering="crispEdges"/><rect x="527" y="678.6" width="4" height="8.9" fill="#1e8c1e" shape-rendering="crispEdges"/><rect x="535" y="679.3" width="4" height="8.2" fill="#1e8c1e" shape-rendering="crispEdges"/><rect x="543" y="681.2" width="4" height="6.3" fill="#1e8c1e" shape-rendering="crispEdges"/><rect x="551" y="684.5" width="4" height="3.0" fill="#1e8c1e" shape-rendering="crispEdges"/><rect x="559" y="686.3" width="4" height="1.2" fill="#1e8c1e" shape-rendering="crispEdges"/><rect x="567" y="686.6" width="4" height="0.9" fill="#1e8c1e" shape-rendering="crispEdges"/><rect x="598" y="684.5" width="4" height="3.0" fill="#1e8c1e" shape-rendering="crispEdges"/><rect x="607" y="681.2" width="4" height="6.3" fill="#1e8c1e" shape-rendering="crispEdges"/><rect x="615" y="677.4" width="4" height="10.1" fill="#1e8c1e" shape-rendering="crispEdges"/><rect x="623" y="675.1" width="4" height="12.4" fill="#1e8c1e" shape-rendering="crispEdges"/><rect x="631" y="674.1" width="4" height="13.4" fill="#1e8c1e" shape-rendering="crispEdges"/><rect x="639" y="674.1" width="4" height="13.4" fill="#1e8c1e" shape-rendering="crispEdges"/><rect x="647" y="675.1" width="4" height="12.4" fill="#1e8c1e" shape-rendering="crispEdges"/><rect x="655" y="676.5" width="4" height="11.0" fill="#1e8c1e" shape-rendering="crispEdges"/><rect x="663" y="676.5" width="4" height="11.0" fill="#1e8c1e" shape-rendering="crispEdges"/><rect x="671" y="674.1" width="4" height="13.4" fill="#1e8c1e" shape-rendering="crispEdges"/><rect x="679" y="674.1" width="4" height="13.4" fill="#1e8c1e" shape-rendering="crispEdges"/><rect x="687" y="673.4" width="4" height="14.1" fill="#1e8c1e" shape-rendering="crispEdges"/><rect x="695" y="673.4" width="4" height="14.1" fill="#1e8c1e" shape-rendering="crispEdges"/><rect x="703" y="675.1" width="4" height="12.4" fill="#1e8c1e" shape-rendering="crispEdges"/><rect x="710" y="678.6" width="4" height="8.9" fill="#1e8c1e" shape-rendering="crispEdges"/><rect x="719" y="681.2" width="4" height="6.3" fill="#1e8c1e" shape-rendering="crispEdges"/><rect x="726" y="685.2" width="4" height="2.3" fill="#1e8c1e" shape-rendering="crispEdges"/><rect x="750" y="687.5" width="4" height="1.2" fill="#1e8c1e" shape-rendering="crispEdges"/><rect x="758" y="687.5" width="4" height="2.3" fill="#1e8c1e" shape-rendering="crispEdges"/><rect x="766" y="687.5" width="4" height="2.3" fill="#1e8c1e" shape-rendering="crispEdges"/><rect x="774" y="687.5" width="4" height="1.2" fill="#1e8c1e" shape-rendering="crispEdges"/><rect x="798" y="686.3" width="4" height="1.2" fill="#1e8c1e" shape-rendering="crispEdges"/><rect x="806" y="686.3" width="4" height="1.2" fill="#1e8c1e" shape-rendering="crispEdges"/><rect x="822" y="685.2" width="4" height="2.3" fill="#1e8c1e" shape-rendering="crispEdges"/><rect x="830" y="685.2" width="4" height="2.3" fill="#1e8c1e" shape-rendering="crispEdges"/><rect x="838" y="685.2" width="4" height="2.3" fill="#1e8c1e" shape-rendering="crispEdges"/><rect x="894" y="686.6" width="4" height="0.9" fill="#1e8c1e" shape-rendering="crispEdges"/><rect x="934" y="687.5" width="4" height="1.2" fill="#1e8c1e" shape-rendering="crispEdges"/><rect x="942" y="687.5" width="4" height="2.3" fill="#1e8c1e" shape-rendering="crispEdges"/><rect x="950" y="687.5" width="4" height="3.5" fill="#1e8c1e" shape-rendering="crispEdges"/><rect x="958" y="687.5" width="4" height="4.7" fill="#1e8c1e" shape-rendering="crispEdges"/><rect x="966" y="687.5" width="4" height="4.7" fill="#1e8c1e" shape-rendering="crispEdges"/><rect x="974" y="687.5" width="4" height="3.5" fill="#1e8c1e" shape-rendering="crispEdges"/><rect x="982" y="687.5" width="4" height="3.5" fill="#1e8c1e" shape-rendering="crispEdges"/><rect x="990" y="687.5" width="4" height="2.3" fill="#1e8c1e" shape-rendering="crispEdges"/><rect x="998" y="687.5" width="4" height="2.3" fill="#1e8c1e" shape-rendering="crispEdges"/><rect x="1006" y="687.5" width="4" height="1.2" fill="#1e8c1e" shape-rendering="crispEdges"/><rect x="1014" y="687.5" width="4" height="1.2" fill="#1e8c1e" shape-rendering="crispEdges"/><rect x="1029" y="687.5" width="4" height="1.2" fill="#1e8c1e" shape-rendering="crispEdges"/><rect x="1037" y="687.5" width="4" height="2.3" fill="#1e8c1e" shape-rendering="crispEdges"/><rect x="1045" y="687.5" width="4" height="2.3" fill="#1e8c1e" shape-rendering="crispEdges"/><rect x="1053" y="687.5" width="4" height="4.7" fill="#1e8c1e" shape-rendering="crispEdges"/><rect x="1061" y="687.5" width="4" height="5.4" fill="#1e8c1e" shape-rendering="crispEdges"/><rect x="1069" y="687.5" width="4" height="7.7" fill="#1e8c1e" shape-rendering="crispEdges"/><rect x="1077" y="687.5" width="4" height="9.4" fill="#1e8c1e" shape-rendering="crispEdges"/><rect x="1085" y="687.5" width="4" height="11.7" fill="#1e8c1e" shape-rendering="crispEdges"/><rect x="1093" y="687.5" width="4" height="13.6" fill="#1e8c1e" shape-rendering="crispEdges"/><rect x="1101" y="687.5" width="4" height="11.7" fill="#1e8c1e" shape-rendering="crispEdges"/><rect x="1109" y="687.5" width="4" height="10.1" fill="#1e8c1e" shape-rendering="crispEdges"/><rect x="1117" y="687.5" width="4" height="6.3" fill="#1e8c1e" shape-rendering="crispEdges"/><rect x="1125" y="687.5" width="4" height="3.0" fill="#1e8c1e" shape-rendering="crispEdges"/><rect x="1133" y="687.5" width="4" height="1.2" fill="#1e8c1e" shape-rendering="crispEdges"/><rect x="1149" y="685.2" width="4" height="2.3" fill="#1e8c1e" shape-rendering="crispEdges"/><rect x="1157" y="683.5" width="4" height="4.0" fill="#1e8c1e" shape-rendering="crispEdges"/><rect x="1165" y="682.3" width="4" height="5.2" fill="#1e8c1e" shape-rendering="crispEdges"/><rect x="1173" y="681.2" width="4" height="6.3" fill="#1e8c1e" shape-rendering="crispEdges"/><path d="M160 687.5H1176" stroke="#000" stroke-width="1.3" shape-rendering="crispEdges"/><polyline points="161.1,690.4 175.2,688.5 186.9,686.9 200.9,687.6 217.3,689.0 233.7,689.2 257.2,689.7 275.9,690.4 292.3,692.0 304.1,694.4 315.8,698.4 327.5,701.4 341.6,705.4 355.6,709.6 369.7,713.8 383.7,718.5 397.8,720.9 411.9,721.8 425.9,721.8 440.0,722.5 448.1,724.1 462.2,726.5 476.2,727.2 490.3,726.0 504.4,723.2 518.4,719.0 532.5,715.5 546.6,713.8 560.6,713.1 579.4,713.1 595.8,712.7 607.5,710.1 619.2,706.1 630.9,701.4 645.0,695.6 659.1,690.4 673.1,685.0 687.2,679.2 701.3,673.3 713.0,669.8 723.4,667.0 735.2,667.4 746.9,667.9 765.6,669.3 784.4,670.2 803.1,669.8 821.9,669.1 840.6,667.9 859.4,667.9 878.1,667.4 896.9,667.0 915.6,667.0 934.4,667.9 953.1,670.2 971.9,672.6 988.3,674.5 1003.4,675.2 1026.9,676.3 1045.6,678.7 1062.0,681.5 1078.4,686.7 1092.5,692.0 1106.6,696.7 1120.6,699.1 1134.7,700.2 1148.8,700.2 1162.8,697.9 1175.7,695.1" fill="none" stroke="#e8b020" stroke-width="1"/><polyline points="162.3,692.0 170.5,689.0 178.7,686.7 186.9,685.7 195.1,686.7 202.1,688.1 209.1,690.4 217.3,692.7 225.5,692.7 233.7,691.3 245.5,690.4 257.2,691.3 268.9,692.0 280.6,693.7 292.3,696.0 301.7,698.4 311.1,702.6 320.5,707.7 329.8,710.8 339.2,713.8 348.6,717.8 358.0,719.5 367.3,722.5 376.7,726.5 386.1,730.2 395.5,727.2 404.8,724.9 416.6,722.5 428.3,723.7 441.1,726.5 455.2,731.9 464.5,733.8 473.9,732.6 488.0,727.2 499.7,720.2 511.4,713.8 523.1,710.1 537.2,708.4 548.9,710.8 560.6,713.1 572.3,712.4 593.4,713.1 602.8,708.4 612.2,700.2 621.6,694.4 630.9,689.0 642.7,685.0 654.4,682.7 666.1,678.0 677.8,670.9 689.5,665.1 698.9,662.3 708.3,661.1 716.4,661.6 723.4,663.9 732.8,667.4 743.4,669.8 753.9,671.0 765.6,673.3 779.7,673.3 791.4,671.0 803.1,670.2 817.2,669.3 828.9,667.4 839.4,666.3 845.3,667.4 854.7,669.3 868.7,669.1 882.8,667.9 896.9,667.4 908.6,667.4 920.3,668.6 932.0,670.2 943.7,672.6 955.5,675.6 967.2,678.7 981.2,678.7 1003.4,678.7 1026.9,679.2 1038.6,681.5 1050.3,683.8 1062.0,687.4 1073.7,693.2 1083.1,699.1 1092.5,704.9 1099.5,707.3 1115.9,707.3 1127.7,703.8 1139.4,701.4 1151.1,698.4 1162.8,694.4 1175.7,690.4" fill="none" stroke="#00009c" stroke-width="1.35" stroke-linejoin="round"/><path d="M197.9 661h7l-3.5 6z" fill="#e00000"/><path d="M201.4 666V687.4" stroke="#c00000" stroke-width="1"/><path d="M739.9 661h7l-3.5 6z" fill="#e00000"/><path d="M743.4 666V668.5" stroke="#c00000" stroke-width="1"/><path d="M851.6 661h7l-3.5 6z" fill="#e00000"/><path d="M855.1 666V668.5" stroke="#c00000" stroke-width="1"/><path d="M915.9 661h7l-3.5 6z" fill="#e00000"/><path d="M919.4 666V668" stroke="#c00000" stroke-width="1"/><path d="M165.8 734h7l-3.5 -7z" fill="#18b818"/><path d="M169.3 688.5V733" stroke="#18b818" stroke-width="1"/><path d="M484.9 734h7l-3.5 -7z" fill="#18b818"/><path d="M488.4 729V733" stroke="#18b818" stroke-width="1"/><path d="M787.9 734h7l-3.5 -7z" fill="#18b818"/><path d="M791.4 669.8V733" stroke="#18b818" stroke-width="1"/><path d="M868.1 734h7l-3.5 -7z" fill="#18b818"/><path d="M871.6 669.8V733" stroke="#18b818" stroke-width="1"/><path d="M1147.1 734h7l-3.5 -7z" fill="#18b818"/><path d="M1150.6 698.4V733" stroke="#18b818" stroke-width="1"/><rect x="140.5" y="646.5" width="206" height="14" fill="#fff4c4" stroke="#7a8cc0" shape-rendering="crispEdges"/><text x="144.5" y="657" font-size="10" textLength="198" lengthAdjust="spacing">MACD - Moving Average Conv. Div. [-3,68]</text><path d="M1206 669.5H1210M1206 687.5H1210M1206 706.5H1210M1206 725.5H1210" stroke="#4866c4" shape-rendering="crispEdges"/><text x="1212" y="673" font-size="10" letter-spacing="0.25">50</text><text x="1212" y="691" font-size="10" letter-spacing="0.25">0</text><text x="1212" y="710" font-size="10" letter-spacing="0.25">-50</text><text x="1212" y="729" font-size="10" letter-spacing="0.25">-100</text></svg>
</body></html>
